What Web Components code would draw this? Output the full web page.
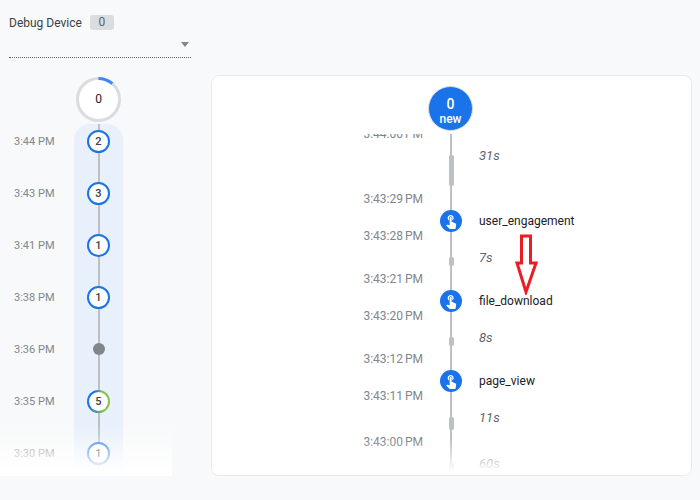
<!DOCTYPE html>
<html>
<head>
<meta charset="utf-8">
<title>Debug View</title>
<style>
    html, body { margin: 0; height: 100%; background: #f8f9fa; overflow: hidden; }
</style>
</head>
<body>
<debug-app>
    <device-picker slot="left" count="0">Debug Device</device-picker>
    <minute-stream slot="left" total="0">
        <minute-row time="3:44 PM" count="2"></minute-row>
        <minute-row time="3:43 PM" count="3"></minute-row>
        <minute-row time="3:41 PM" count="1"></minute-row>
        <minute-row time="3:38 PM" count="1"></minute-row>
        <minute-row time="3:36 PM"></minute-row>
        <minute-row time="3:35 PM" count="5" mixed></minute-row>
        <minute-row time="3:30 PM" count="1"></minute-row>
    </minute-stream>
    <seconds-card slot="right" count="0">
        <time-row>3:44:00 PM</time-row>
        <gap-row size="31" height="51">31s</gap-row>
        <event-row from="3:43:29 PM" to="3:43:28 PM">user_engagement</event-row>
        <gap-row size="9" height="29">7s</gap-row>
        <event-row from="3:43:21 PM" to="3:43:20 PM">file_download</event-row>
        <gap-row size="9" height="29">8s</gap-row>
        <event-row from="3:43:12 PM" to="3:43:11 PM">page_view</event-row>
        <gap-row size="13" height="32">11s</gap-row>
        <time-row>3:43:00 PM</time-row>
        <gap-row size="40" height="60">60s</gap-row>
    </seconds-card>
</debug-app>

<script>
const LINE = 'linear-gradient(#bdc1c6, #bdc1c6) center / 2px 100% no-repeat';

class DebugApp extends HTMLElement {
    constructor() {
        super();
        this.attachShadow({ mode: 'open' }).innerHTML = `<style>
                :host {
                    display: grid;
                    grid-template-columns: 211px 481px;
                    height: 500px;
                    overflow: hidden;
                    font-family: Roboto, "Liberation Sans", sans-serif;
                    position: relative;
                }
                .right { padding-top: 75px; }
                svg { position: absolute; left: 514px; top: 233px; }
            </style>
            <div class="left"><slot name="left"></slot></div>
            <div class="right"><slot name="right"></slot></div>
            <svg width="25" height="62" viewBox="0 0 25 62">
                <path d="M7.5 3H16.5V30H22L12 59L3 30H7.5Z" fill="none" stroke="#ed1c24" stroke-width="3"/>
            </svg>`;
    }
}

class DevicePicker extends HTMLElement {
    constructor() {
        super();
        this.attachShadow({ mode: 'open' }).innerHTML = `<style>
                :host { display: block; padding: 15px 9px 0; height: 63px; box-sizing: border-box; }
                .title { display: flex; align-items: center; gap: 8px; height: 15px; font-size: 12px; color: #3c4043; }
                .badge {
                    width: 24px;
                    height: 15px;
                    line-height: 15px;
                    text-align: center;
                    background: #dadce0;
                    border-radius: 3px;
                    font-size: 12px;
                    color: #5f6368;
                }
                .select {
                    display: flex;
                    justify-content: flex-end;
                    width: 182px;
                    box-sizing: border-box;
                    height: 28px;
                    padding: 12px 2px 0 0;
                    border-bottom: 1px dotted #5f6368;
                }
                .arrow {
                    width: 0;
                    height: 0;
                    border: 4.5px solid transparent;
                    border-top: 5px solid #80868b;
                    border-bottom: 0;
                }
            </style>
            <div class="title"><slot></slot><span class="badge"></span></div>
            <div class="select"><span class="arrow"></span></div>`;
    }

    connectedCallback() {
        this.shadowRoot.querySelector('.badge').textContent = this.getAttribute('count');
    }
}

class MinuteStream extends HTMLElement {
    constructor() {
        super();
        this.attachShadow({ mode: 'open' }).innerHTML = `<style>
                :host { display: block; position: relative; width: 172px; height: 413px; padding-top: 14px; box-sizing: border-box; overflow: hidden; }
                .total { display: block; margin-left: 76px; width: 45px; height: 45px; position: relative; }
                .total svg { display: block; }
                .total span {
                    position: absolute;
                    inset: 0;
                    line-height: 44px;
                    text-align: center;
                    font-size: 12px;
                    color: #202124;
                }
                .rows { margin-top: 2px; }
                .fade {
                    position: absolute;
                    left: 0;
                    right: 0;
                    bottom: 0;
                    height: 50px;
                    background: linear-gradient(rgba(255,255,255,0), #fff 90%);
                }
            </style>
            <div class="total">
                <svg width="45" height="45" viewBox="0 0 45 45">
                    <circle cx="22.5" cy="22.5" r="21" fill="#fff" stroke="#dadce0" stroke-width="3"/>
                    <circle cx="22.5" cy="22.5" r="21" fill="none" stroke="#4285f4" stroke-width="3"
                        stroke-dasharray="15 200" transform="rotate(-90 22.5 22.5)"/>
                </svg>
                <span></span>
            </div>
            <div class="rows"><slot></slot></div>
            <div class="fade"></div>`;
    }

    connectedCallback() {
        this.shadowRoot.querySelector('.total span').textContent = this.getAttribute('total');
    }
}

class MinuteRow extends HTMLElement {
    constructor() {
        super();
        this.attachShadow({ mode: 'open' }).innerHTML = `<style>
                :host { display: grid; grid-template-columns: 74px 49px; height: 52px; }
                :host(:first-child) .track { border-radius: 16px 16px 0 0; }
                .time { padding: 6px 0 0 14px; line-height: 24px; font-size: 11px; color: #80868b; }
                .track {
                    display: flex;
                    justify-content: center;
                    padding-top: 5.5px;
                    box-sizing: border-box;
                    background: ${LINE}, #e8f0fb;
                }
                .dot {
                    width: 23px;
                    height: 23px;
                    box-sizing: border-box;
                    border: 2px solid #1a73e8;
                    border-radius: 50%;
                    background: #fff;
                    line-height: 19px;
                    text-align: center;
                    font-size: 11px;
                    font-weight: 500;
                    color: #3c4043;
                }
                .dot.mixed {
                    border-color: transparent;
                    background: linear-gradient(#fff, #fff) padding-box,
                        conic-gradient(from 20deg, #8bc34a 0 35%, #1a73e8 60% 90%, #8bc34a) border-box;
                }
                .dot.empty {
                    width: 12px;
                    height: 12px;
                    margin-top: 5px;
                    border: 0;
                    background: #80868b;
                }
            </style>
            <div class="time"></div>
            <div class="track"><div class="dot"></div></div>`;
    }

    connectedCallback() {
        const root = this.shadowRoot;
        const dot = root.querySelector('.dot');

        root.querySelector('.time').textContent = this.getAttribute('time');

        if (this.hasAttribute('count')) {
            dot.textContent = this.getAttribute('count');
            dot.classList.toggle('mixed', this.hasAttribute('mixed'));
        } else {
            dot.classList.add('empty');
        }
    }
}

class SecondsCard extends HTMLElement {
    constructor() {
        super();
        this.attachShadow({ mode: 'open' }).innerHTML = `<style>
                :host {
                    display: flex;
                    flex-direction: column;
                    align-items: stretch;
                    height: 401px;
                    box-sizing: border-box;
                    background: #fff;
                    border: 1px solid #e8eaed;
                    border-radius: 8px;
                    overflow: hidden;
                }
                .head { flex: none; padding: 10px 0 3px 216px; }
                .bubble {
                    width: 45px;
                    height: 45px;
                    box-sizing: border-box;
                    border: 1px solid #dadce0;
                    border-radius: 50%;
                    background: #1a73e8;
                    color: #fff;
                    text-align: center;
                    padding-top: 10px;
                }
                .bubble b { display: block; font-size: 14px; line-height: 15px; font-weight: 500; }
                .bubble span { display: block; font-size: 12px; line-height: 14px; font-weight: 500; }
                .scroll { flex: 1; position: relative; overflow: hidden; }
                .rows { margin-top: -7px; }
                .fade {
                    position: absolute;
                    left: 0;
                    right: 0;
                    bottom: 0;
                    height: 36px;
                    background: linear-gradient(rgba(255,255,255,0), #fff 90%);
                }
            </style>
            <div class="head"><div class="bubble"><b></b><span>new</span></div></div>
            <div class="scroll">
                <div class="rows"><slot></slot></div>
                <div class="fade"></div>
            </div>`;
    }

    connectedCallback() {
        this.shadowRoot.querySelector('b').textContent = this.getAttribute('count');
    }
}

const ROW_STYLE = `
    :host { display: grid; grid-template-columns: 227px 24px 1fr; font-size: 12px; }
    .time { padding-right: 16px; text-align: right; line-height: 14px; color: #80868b; word-spacing: -1px; }
    .track { display: flex; justify-content: center; background: ${LINE}; }`;

class TimeRow extends HTMLElement {
    constructor() {
        super();
        this.attachShadow({ mode: 'open' }).innerHTML = `<style>${ROW_STYLE}</style>
            <div class="time"><slot></slot></div>
            <div class="track"></div>`;
    }
}

class GapRow extends HTMLElement {
    constructor() {
        super();
        this.attachShadow({ mode: 'open' }).innerHTML = `<style>${ROW_STYLE}
                .pill { width: 5px; margin-top: 14px; border-radius: 2px; background: #bdc1c6; }
                .label { padding: 6px 0 0 16px; line-height: 18px; font-size: 13px; font-style: italic; color: #5f6368; }
            </style>
            <div class="time"></div>
            <div class="track"><div class="pill"></div></div>
            <div class="label"><slot></slot></div>`;
    }

    connectedCallback() {
        this.shadowRoot.querySelector('.pill').style.height = this.getAttribute('size') + 'px';
        this.style.height = this.getAttribute('height') + 'px';
    }
}

class EventRow extends HTMLElement {
    constructor() {
        super();
        this.attachShadow({ mode: 'open' }).innerHTML = `<style>${ROW_STYLE}
                :host { height: 51px; }
                .time { display: flex; flex-direction: column; justify-content: space-between; }
                .icon {
                    display: flex;
                    align-items: center;
                    justify-content: center;
                    width: 22px;
                    height: 22px;
                    margin-top: 18px;
                    border-radius: 50%;
                    background: #1a73e8;
                }
                .label { padding: 18px 0 0 16px; line-height: 22px; font-size: 12px; color: #202124; }
            </style>
            <div class="time"><span class="from"></span><span class="to"></span></div>
            <div class="track">
                <div class="icon">
                    <svg width="16" height="16" viewBox="0 0 24 24" fill="#fff">
                        <path d="M9 11.24V7.5C9 6.12 10.12 5 11.5 5S14 6.12 14 7.5v3.74c1.21-.81 2-2.18 2-3.74C16 5.01 13.99 3 11.5 3S7 5.01 7 7.5c0 1.56.79 2.93 2 3.74zm9.84 4.63l-4.54-2.26c-.17-.07-.35-.11-.54-.11H13v-6c0-.83-.67-1.5-1.5-1.5S10 6.67 10 7.5v10.74l-3.43-.72c-.08-.01-.15-.03-.24-.03-.31 0-.59.13-.79.33l-.79.8 4.94 4.94c.27.27.65.44 1.06.44h6.79c.75 0 1.33-.55 1.44-1.28l.75-5.27c.01-.07.02-.14.02-.2 0-.62-.38-1.16-.91-1.38z"/>
                    </svg>
                </div>
            </div>
            <div class="label"><slot></slot></div>`;
    }

    connectedCallback() {
        this.shadowRoot.querySelector('.from').textContent = this.getAttribute('from');
        this.shadowRoot.querySelector('.to').textContent = this.getAttribute('to');
    }
}

customElements.define('debug-app', DebugApp);
customElements.define('device-picker', DevicePicker);
customElements.define('minute-stream', MinuteStream);
customElements.define('minute-row', MinuteRow);
customElements.define('seconds-card', SecondsCard);
customElements.define('time-row', TimeRow);
customElements.define('gap-row', GapRow);
customElements.define('event-row', EventRow);
</script>
</body>
</html>
